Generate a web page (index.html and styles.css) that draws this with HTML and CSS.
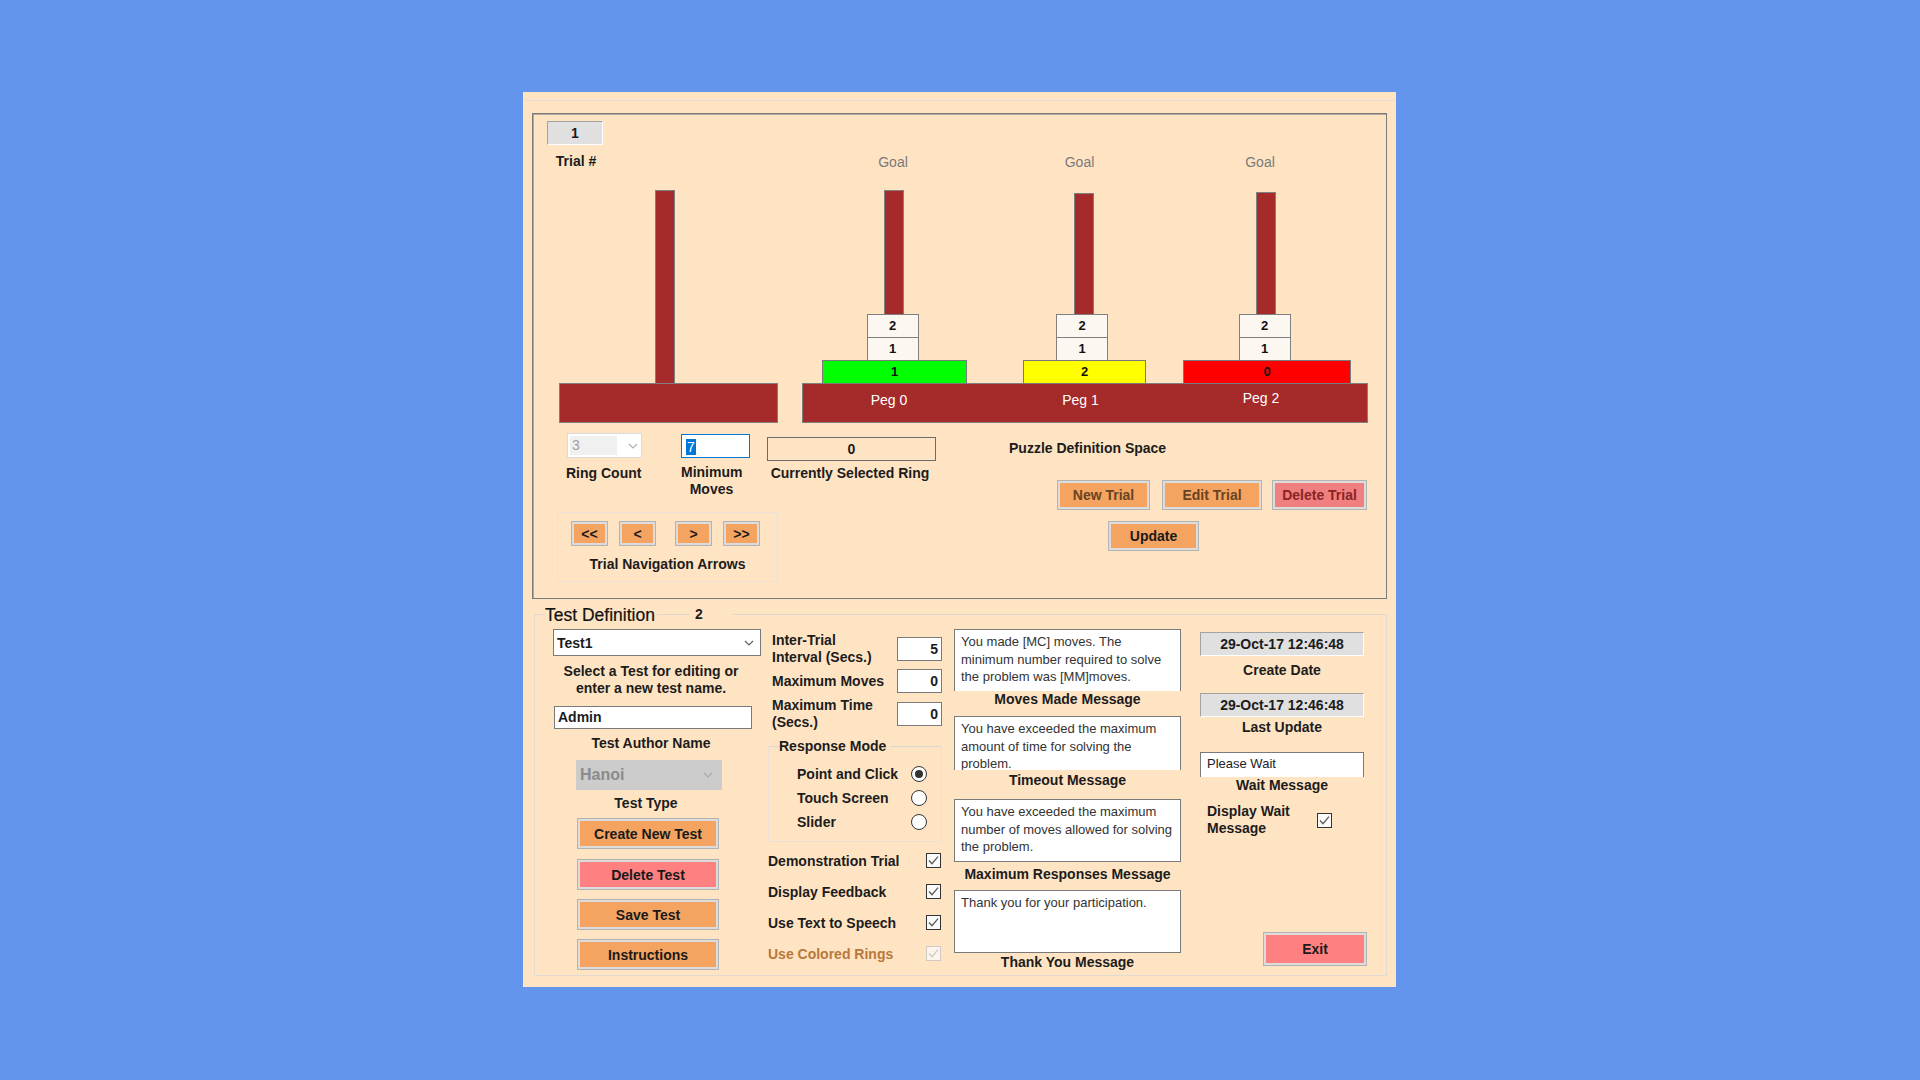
FILE: index.html
```html
<!DOCTYPE html>
<html>
<head>
<meta charset="utf-8">
<title>Tower of Hanoi Test Editor</title>
<link rel="stylesheet" href="styles.css">
</head>
<body>
<div class="window">
  <div class="win-top"></div>

  <div class="frame">
    <div class="board-row">
      <div class="left-col">
        <div class="sunken trial-box">1</div>
        <div class="lbl trial-lbl">Trial #</div>
        <div class="left-board">
          <div class="peg peg-left"></div>
          <div class="base"></div>
        </div>
      </div>

      <div class="goal-board">
        <div class="stacks">
          <div class="stack s0">
            <div class="goal">Goal</div>
            <div class="peg"></div>
            <div class="ring-sm">2</div>
            <div class="ring-sm">1</div>
            <div class="ring-big green">1</div>
          </div>
          <div class="stack s1">
            <div class="goal">Goal</div>
            <div class="peg"></div>
            <div class="ring-sm">2</div>
            <div class="ring-sm">1</div>
            <div class="ring-big yellow">2</div>
          </div>
          <div class="stack s2">
            <div class="goal">Goal</div>
            <div class="peg"></div>
            <div class="ring-sm">2</div>
            <div class="ring-sm">1</div>
            <div class="ring-big red">0</div>
          </div>
        </div>
        <div class="base goal-base">
          <span class="peg-name pn0">Peg 0</span>
          <span class="peg-name pn1">Peg 1</span>
          <span class="peg-name pn2">Peg 2</span>
        </div>
      </div>
    </div>

    <div class="lower-row">
      <div class="col-l">
        <div class="ctl-row">
          <div class="rc-block">
            <div class="combo-dis">
              <span class="combo-dis-val">3</span>
              <svg class="chev" width="10" height="6" viewBox="0 0 10 6"><path d="M1 1l4 4 4-4" fill="none" stroke="#b0b0b0" stroke-width="1.2"/></svg>
            </div>
            <div class="lbl center rc-lbl">Ring Count</div>
          </div>
          <div class="mm-block">
            <div class="focus-input"><span class="sel">7</span></div>
            <div class="lbl center mm-lbl">Minimum<br>Moves</div>
          </div>
        </div>
        <div class="nav-frame">
          <div class="nav-btns">
            <div class="btn nav-btn">&lt;&lt;</div>
            <div class="btn nav-btn nb2">&lt;</div>
            <div class="btn nav-btn nb3">&gt;</div>
            <div class="btn nav-btn nb4">&gt;&gt;</div>
          </div>
          <div class="lbl center nav-lbl">Trial Navigation Arrows</div>
        </div>
      </div>

      <div class="col-m">
        <div class="cur-ring">0</div>
        <div class="lbl center cur-lbl">Currently Selected Ring</div>
      </div>

      <div class="col-r">
        <div class="lbl pds-lbl">Puzzle Definition Space</div>
        <div class="trial-btns">
          <div class="btn dim w93">New Trial</div>
          <div class="btn dim w100 g12">Edit Trial</div>
          <div class="btn del-trial w95 g10">Delete Trial</div>
        </div>
        <div class="btn update">Update</div>
      </div>
    </div>
  </div>

  <div class="group">
    <div class="group-head">
      <span class="ln ln8"></span>
      <span class="legend">Test Definition</span>
      <span class="ln ln32"></span>
      <span class="legend-num">2</span>
      <span class="ln grow"></span>
    </div>

    <div class="group-body">
      <div class="c1">
        <div class="combo">
          <span class="combo-val">Test1</span>
          <svg class="chev" width="10" height="6" viewBox="0 0 10 6"><path d="M1 1l4 4 4-4" fill="none" stroke="#606060" stroke-width="1.2"/></svg>
        </div>
        <div class="lbl center c1-help">Select a Test for editing or<br>enter a new test name.</div>
        <div class="textin admin">Admin</div>
        <div class="lbl center c1-author">Test Author Name</div>
        <div class="combo-gray">
          <span>Hanoi</span>
          <svg class="chev" width="10" height="6" viewBox="0 0 10 6"><path d="M1 1l4 4 4-4" fill="none" stroke="#a9a9a9" stroke-width="1.2"/></svg>
        </div>
        <div class="lbl center c1-type">Test Type</div>
        <div class="btn tbtn tb1">Create New Test</div>
        <div class="btn tbtn pink tb2">Delete Test</div>
        <div class="btn tbtn tb3">Save Test</div>
        <div class="btn tbtn tb3">Instructions</div>
      </div>

      <div class="c2">
        <div class="num-row r1">
          <div class="lbl nlbl">Inter-Trial<br>Interval (Secs.)</div>
          <div class="numin">5</div>
        </div>
        <div class="num-row r2">
          <div class="lbl nlbl">Maximum Moves</div>
          <div class="numin">0</div>
        </div>
        <div class="num-row r3">
          <div class="lbl nlbl">Maximum Time<br>(Secs.)</div>
          <div class="numin">0</div>
        </div>

        <div class="rm">
          <div class="rm-head">
            <span class="ln ln10"></span>
            <span class="lbl rm-legend">Response Mode</span>
            <span class="ln grow"></span>
          </div>
          <div class="rm-body">
            <div class="radio-row"><span class="lbl">Point and Click</span><span class="radio on"></span></div>
            <div class="radio-row"><span class="lbl">Touch Screen</span><span class="radio"></span></div>
            <div class="radio-row"><span class="lbl">Slider</span><span class="radio"></span></div>
          </div>
        </div>

        <div class="checks">
          <div class="check-row"><span class="lbl">Demonstration Trial</span><span class="cb"><svg width="13" height="13" viewBox="0 0 13 13"><path d="M2 6.5l3 3.2 6-7" fill="none" stroke="#5a5a5a" stroke-width="1.3"/></svg></span></div>
          <div class="check-row"><span class="lbl">Display Feedback</span><span class="cb"><svg width="13" height="13" viewBox="0 0 13 13"><path d="M2 6.5l3 3.2 6-7" fill="none" stroke="#5a5a5a" stroke-width="1.3"/></svg></span></div>
          <div class="check-row"><span class="lbl">Use Text to Speech</span><span class="cb"><svg width="13" height="13" viewBox="0 0 13 13"><path d="M2 6.5l3 3.2 6-7" fill="none" stroke="#5a5a5a" stroke-width="1.3"/></svg></span></div>
          <div class="check-row"><span class="lbl dis-lbl">Use Colored Rings</span><span class="cb cb-dis"><svg width="13" height="13" viewBox="0 0 13 13"><path d="M2 6.5l3 3.2 6-7" fill="none" stroke="#c9c9c9" stroke-width="1.3"/></svg></span></div>
        </div>
      </div>

      <div class="c3">
        <div class="msg open m1">You made [MC] moves. The minimum number required to solve the problem was [MM]moves.</div>
        <div class="lbl center ml1">Moves Made Message</div>
        <div class="msg open m2">You have exceeded the maximum amount of time for solving the problem.</div>
        <div class="lbl center ml2">Timeout Message</div>
        <div class="msg m3">You have exceeded the maximum number of moves allowed for solving the problem.</div>
        <div class="lbl center ml3">Maximum Responses Message</div>
        <div class="msg m4">Thank you for your participation.</div>
        <div class="lbl center ml4">Thank You Message</div>
      </div>

      <div class="c4">
        <div class="sunken date d1">29-Oct-17 12:46:48</div>
        <div class="lbl center dl1">Create Date</div>
        <div class="sunken date d2">29-Oct-17 12:46:48</div>
        <div class="lbl center dl2">Last Update</div>
        <div class="wait-in">Please Wait</div>
        <div class="lbl center wl">Wait Message</div>
        <div class="dw-row">
          <div class="lbl dw-lbl">Display Wait<br>Message</div>
          <span class="cb"><svg width="13" height="13" viewBox="0 0 13 13"><path d="M2 6.5l3 3.2 6-7" fill="none" stroke="#5a5a5a" stroke-width="1.3"/></svg></span>
        </div>
        <div class="btn pink exit">Exit</div>
      </div>
    </div>
  </div>
</div>
</body>
</html>
```

FILE: styles.css
```css
* { box-sizing: border-box; }
html, body { margin: 0; padding: 0; }
body {
  width: 1920px;
  height: 1080px;
  overflow: hidden;
  background: #6495ed;
  font-family: "Liberation Sans", Arial, sans-serif;
  color: #1c1c1c;
  display: flex;
  justify-content: flex-start;
  align-items: flex-start;
  padding: 92px 0 0 523px;
}

.window {
  width: 873px;
  height: 895px;
  background: #ffe4c4;
  border-left: 1px solid #fcebd6;
  padding: 0 9px 0 8px;
  display: flex;
  flex-direction: column;
}
.win-top {
  height: 9px;
  flex: none;
  border-bottom: 1px solid #e3dcd8;
  margin: 0 -9px 12px -8px;
}

.lbl { font-size: 14px; font-weight: bold; line-height: 16px; white-space: nowrap; color: #1c1c1c; }
.center { text-align: center; }

.sunken {
  background: #e0e0e0;
  border-top: 1px solid #a3a3a3;
  border-left: 1px solid #a3a3a3;
  border-right: 1px solid #ffffff;
  border-bottom: 1px solid #ffffff;
  font-weight: bold;
  font-size: 14px;
  text-align: center;
  line-height: 22px;
}

/* ---------- puzzle frame ---------- */
.frame {
  flex: none;
  width: 855px;
  height: 486px;
  border: 1px solid #7a7a7a;
  box-shadow: inset 1px 1px 0 #b3a99f;
  padding: 7px 0 0 14px;
}
.board-row { display: flex; align-items: flex-start; }
.left-col { width: 231px; display: flex; flex-direction: column; }
.trial-box { width: 56px; height: 24px; }
.trial-lbl { width: 58px; text-align: center; margin-top: 8px; }
.left-board { margin: 21px 0 0 12px; width: 219px; display: flex; flex-direction: column; }
.peg {
  width: 20px;
  background: #a52a2a;
  border: 1px solid #808080;
  border-bottom: none;
}
.peg-left { height: 193px; margin-left: 96px; }
.base {
  height: 40px;
  background: #a52a2a;
  border: 1px solid #808080;
}

.goal-board {
  margin: 29px 0 0 24px;
  width: 566px;
  display: flex;
  flex-direction: column;
}
.stacks { position: relative; height: 234px; }
.stack {
  position: absolute;
  top: 4px;
  bottom: 0;
  display: flex;
  flex-direction: column;
  align-items: center;
}
.s0 { left: 20px; width: 145px; }
.s1 { left: 221px; width: 123px; }
.s2 { left: 381px; width: 168px; }
.goal { font-size: 14px; line-height: 16px; color: #7a7a7a; }
.s0 .goal { margin-right: 3px; }
.s1 .goal { margin-right: 10px; }
.s2 .goal { margin-right: 14px; }
.stack .peg { flex: 1; margin-top: 20px; }
.s0 .peg { margin-right: 1px; }
.s1 .peg { margin-top: 23px; margin-right: 2px; }
.s2 .peg { margin-top: 22px; margin-right: 2px; }
.ring-sm {
  width: 52px;
  height: 24px;
  flex: none;
  background: #fcf7f1;
  border: 1px solid #808080;
  font-size: 13px;
  font-weight: bold;
  line-height: 22px;
  text-align: center;
  color: #111;
}
.ring-sm + .ring-sm { margin-top: -1px; }
.s0 .ring-sm { margin-right: 4px; }
.s1 .ring-sm { margin-right: 5px; }
.s2 .ring-sm { margin-right: 5px; }
.ring-big {
  width: 100%;
  height: 24px;
  flex: none;
  margin-top: -1px;
  border: 1px solid #7a7a7a;
  font-size: 13px;
  font-weight: bold;
  line-height: 22px;
  text-align: center;
  color: #111;
}
.green { background: #00ff00; }
.yellow { background: #ffff00; }
.red { background: #ff0000; }
.goal-base { margin-top: -1px; display: flex; }
.peg-name { color: #ffffff; font-size: 14px; line-height: 16px; text-align: center; padding-top: 8px; }
.pn0 { width: 172px; }
.pn1 { width: 211px; }
.pn2 { width: 150px; padding-top: 6px; }

/* lower part */
.lower-row { display: flex; margin: 10px 0 0 10px; align-items: flex-start; }
.col-l { width: 210px; flex: none; }
.ctl-row { display: flex; align-items: flex-start; }
.rc-block { margin-left: 9px; width: 76px; }
.combo-dis {
  margin-left: 1px;
  width: 75px;
  height: 25px;
  background: #ffffff;
  border: 1px solid #dadada;
  display: flex;
  align-items: center;
  padding: 2px;
}
.combo-dis-val {
  width: 47px;
  height: 19px;
  background: #f0f0f0;
  color: #a0a0a0;
  font-size: 14px;
  line-height: 19px;
  padding-left: 2px;
}
.combo-dis .chev { margin-left: 11px; }
.rc-lbl { margin-top: 7px; width: 72px; }
.mm-block { margin-left: 39px; width: 69px; }
.focus-input {
  margin-top: 1px;
  height: 24px;
  background: #ffffff;
  border: 1px solid #0078d7;
  padding: 3px 0 0 4px;
}
.sel {
  display: inline-block;
  background: #0078d7;
  color: #ffffff;
  font-size: 14px;
  line-height: 16px;
  padding: 0 1px;
}
.mm-lbl { margin-top: 6px; line-height: 17px; width: 61px; }
.nav-frame {
  margin-top: 14px;
  width: 220px;
  height: 70px;
  border: 1px solid #ece2d6;
  padding: 8px 0 0 13px;
}
.nav-btns { display: flex; }
.nav-btn { width: 37px; height: 25px; font-size: 13px; }
.nb2 { margin-left: 11px; }
.nb3 { margin-left: 19px; }
.nb4 { margin-left: 11px; }
.nav-lbl { margin: 10px 0 0 -13px; width: 219px; }

.col-m { width: 169px; flex: none; }
.cur-ring {
  margin-top: 4px;
  height: 24px;
  border: 1px solid #6b6b6b;
  font-size: 14px;
  font-weight: bold;
  text-align: center;
  line-height: 22px;
}
.cur-lbl { margin-top: 4px; width: 166px; }

.col-r { flex: 1; display: flex; flex-direction: column; align-items: flex-start; }
.pds-lbl { margin: 7px 0 0 73px; }
.trial-btns { display: flex; margin: 24px 0 0 121px; }
.w93 { width: 93px; height: 30px; }
.w100 { width: 100px; height: 30px; }
.w95 { width: 95px; height: 30px; }
.g12 { margin-left: 12px; }
.g10 { margin-left: 10px; }
.update { width: 91px; height: 30px; margin: 11px 0 0 172px; }

.btn {
  display: flex;
  align-items: center;
  justify-content: center;
  border: 1px solid #b3b3b3;
  box-shadow: inset 0 0 0 2px #dedcda;
  background: #f4a460;
  font-size: 14px;
  font-weight: bold;
  color: #1a1a1a;
  white-space: nowrap;
}
.dim { color: #6a4322; }
.del-trial { background: #f08080; color: #8b2424; }
.pink { background: #ff8080; }

/* ---------- test definition group ---------- */
.group {
  flex: none;
  margin: 15px 0 0 2px;
  width: 853px;
  height: 362px;
  border: 1px solid #e2dbd3;
  border-top: none;
  display: flex;
  flex-direction: column;
}
.group-head {
  height: 20px;
  margin-top: -10px;
  display: flex;
  align-items: center;
  flex: none;
}
.ln { height: 1px; background: #dcd6d0; flex: none; }
.ln8 { width: 8px; }
.ln10 { width: 10px; }
.ln32 { width: 32px; }
.grow { flex: 1; }
.legend { font-size: 17.5px; line-height: 20px; padding: 2px 2px 0 2px; color: #111111; -webkit-text-stroke: 0.2px #111111; }
.legend-num { font-size: 14px; font-weight: bold; width: 44px; padding-left: 6px; line-height: 16px; }

.group-body { display: flex; align-items: flex-start; padding-left: 18px; }

.c1 { width: 208px; flex: none; margin-top: 5px; display: flex; flex-direction: column; align-items: flex-start; }
.combo {
  width: 208px;
  height: 27px;
  background: #ffffff;
  border: 1px solid #7a7a7a;
  display: flex;
  align-items: center;
  justify-content: space-between;
  padding: 0 6px 0 3px;
}
.combo-val { font-size: 14px; font-weight: bold; }
.c1-help { width: 196px; margin-top: 7px; line-height: 17px; }
.textin {
  background: #ffffff;
  border: 1px solid #7a7a7a;
  font-size: 14px;
  font-weight: bold;
  line-height: 21px;
  padding-left: 3px;
}
.admin { width: 198px; height: 23px; margin: 9px 0 0 1px; }
.c1-author { width: 196px; margin-top: 6px; }
.combo-gray {
  width: 146px;
  height: 30px;
  margin: 9px 0 0 23px;
  background: #cccccc;
  display: flex;
  align-items: center;
  justify-content: space-between;
  padding: 0 9px 0 4px;
  font-size: 16px;
  font-weight: bold;
  color: #8b8b8b;
}
.c1-type { width: 186px; margin-top: 5px; }
.tbtn { width: 142px; height: 31px; margin-left: 24px; }
.tb1 { margin-top: 7px; }
.tb2 { margin-top: 10px; }
.tb3 { margin-top: 9px; }

.c2 { width: 174px; flex: none; margin: 8px 0 0 7px; }
.num-row { display: flex; justify-content: space-between; }
.nlbl { line-height: 17px; padding-left: 4px; }
.numin {
  width: 45px;
  height: 24px;
  background: #ffffff;
  border: 1px solid #7a7a7a;
  text-align: right;
  padding-right: 3px;
  font-size: 14px;
  font-weight: bold;
  line-height: 22px;
}
.r1 { align-items: flex-start; }
.r1 .numin { margin-top: 5px; }
.r2 { margin-top: 3px; align-items: center; }
.r3 { margin-top: 4px; align-items: center; }

.rm {
  margin-top: 15px;
  width: 174px;
  border: 1px solid #e9e0d6;
  border-top: none;
  display: flex;
  flex-direction: column;
}
.rm-head { display: flex; align-items: center; height: 16px; margin-top: -8px; }
.rm-legend { padding-right: 4px; }
.rm-body { padding: 8px 0 7px 0; }
.radio-row { height: 24px; display: flex; align-items: center; padding-left: 28px; }
.radio-row .lbl { flex: 1; }
.radio {
  width: 16px;
  height: 16px;
  border-radius: 50%;
  border: 1px solid #333333;
  background: #ffffff;
  margin-right: 14px;
  display: flex;
  align-items: center;
  justify-content: center;
}
.radio.on::after {
  content: "";
  width: 8px;
  height: 8px;
  border-radius: 50%;
  background: #333333;
}

.checks { margin-top: 3px; }
.check-row { height: 31px; display: flex; align-items: center; justify-content: space-between; padding-right: 1px; }
.cb {
  width: 15px;
  height: 15px;
  border: 1px solid #333333;
  background: #fafafa;
  display: flex;
  align-items: center;
  justify-content: center;
  flex: none;
}
.cb-dis { border-color: #cfcac4; background: #fbf5ee; }
.dis-lbl { color: #b8783a; }

.c3 { width: 227px; flex: none; margin: 5px 0 0 12px; }
.msg {
  background: #ffffff;
  border: 1px solid #7a7a7a;
  font-size: 13px;
  line-height: 17.5px;
  color: #333333;
  padding: 3px 6px 0 6px;
  overflow: hidden;
}
.open { border-bottom: none; }
.m1 { height: 62px; }
.m2 { height: 54px; margin-top: 9px; }
.m3 { height: 63px; margin-top: 9px; }
.m4 { height: 63px; margin-top: 8px; }
.ml2 { line-height: 20px; }
.ml3 { margin-top: 4px; }
.ml4 { margin-top: 1px; }

.c4 { width: 167px; flex: none; margin: 8px 0 0 19px; }
.date { width: 164px; height: 24px; }
.d2 { margin-top: 15px; }
.c4 .lbl.center { width: 164px; }
.dl1 { margin-top: 6px; }
.dl2 { margin-top: 2px; }
.wait-in {
  margin-top: 17px;
  width: 164px;
  height: 25px;
  background: #ffffff;
  border: 1px solid #7a7a7a;
  border-bottom: none;
  font-size: 13px;
  line-height: 22px;
  padding-left: 6px;
  color: #222222;
}
.dw-row { margin-top: 10px; display: flex; align-items: center; }
.dw-lbl { width: 117px; padding-left: 7px; line-height: 17px; }
.exit { margin: 95px 0 0 63px; width: 104px; height: 34px; }
```
